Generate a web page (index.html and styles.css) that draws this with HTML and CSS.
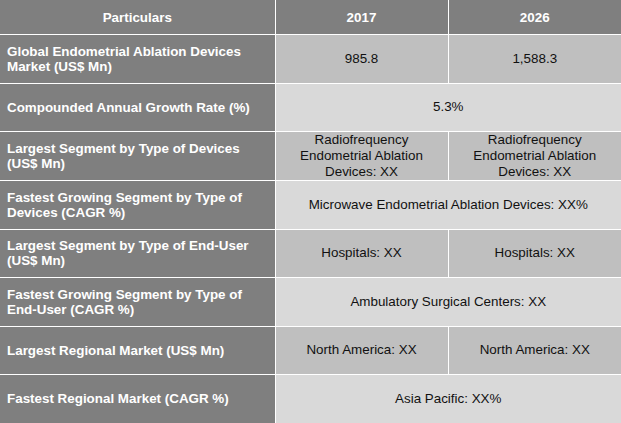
FILE: index.html
```html
<!DOCTYPE html>
<html>
<head>
<meta charset="utf-8">
<link rel="stylesheet" href="styles.css">
</head>
<body>
<table class="grid">
  <colgroup>
    <col class="c1">
    <col class="c2">
    <col class="c3">
  </colgroup>
  <thead>
    <tr class="head">
      <th>Particulars</th>
      <th>2017</th>
      <th>2026</th>
    </tr>
  </thead>
  <tbody>
    <tr class="dark">
      <th class="label">Global Endometrial Ablation Devices Market (US$ Mn)</th>
      <td>985.8</td>
      <td>1,588.3</td>
    </tr>
    <tr class="light">
      <th class="label">Compounded Annual Growth Rate (%)</th>
      <td colspan="2">5.3%</td>
    </tr>
    <tr class="dark">
      <th class="label">Largest Segment by Type of Devices (US$ Mn)</th>
      <td>Radiofrequency Endometrial Ablation Devices: XX</td>
      <td>Radiofrequency Endometrial Ablation Devices: XX</td>
    </tr>
    <tr class="light">
      <th class="label">Fastest Growing Segment by Type of Devices (CAGR %)</th>
      <td colspan="2">Microwave Endometrial Ablation Devices: XX%</td>
    </tr>
    <tr class="dark">
      <th class="label">Largest Segment by Type of End-User (US$ Mn)</th>
      <td>Hospitals: XX</td>
      <td>Hospitals: XX</td>
    </tr>
    <tr class="light">
      <th class="label">Fastest Growing Segment by Type of End&#8209;User (CAGR %)</th>
      <td colspan="2">Ambulatory Surgical Centers: XX</td>
    </tr>
    <tr class="dark">
      <th class="label">Largest Regional Market (US$ Mn)</th>
      <td>North America: XX</td>
      <td>North America: XX</td>
    </tr>
    <tr class="light">
      <th class="label">Fastest Regional Market (CAGR %)</th>
      <td colspan="2">Asia Pacific: XX%</td>
    </tr>
  </tbody>
</table>
</body>
</html>
```
FILE: styles.css
```css
html, body {
  margin: 0;
  padding: 0;
  background: #ffffff;
}
.grid {
  width: 621px;
  border-collapse: collapse;
  table-layout: fixed;
  font-family: "Liberation Sans", Arial, sans-serif;
  font-size: 13.4px;
}
.c1 { width: 275px; }
.c2 { width: 173px; }
.c3 { width: 173px; }
.grid th, .grid td {
  border: 1px solid #ffffff;
  padding: 0 6px;
  vertical-align: middle;
  line-height: 15px;
}
.grid tr:first-child th { border-top: none; }
.grid th:first-child { border-left: none; }
.grid th:last-child, .grid td:last-child { border-right: none; }
.grid tbody tr:last-child th, .grid tbody tr:last-child td { border-bottom: none; }
.head th {
  background: #7f7f7f;
  color: #ffffff;
  font-weight: bold;
  text-align: center;
  height: 34px;
}
.grid th.label {
  background: #7f7f7f;
  color: #ffffff;
  font-weight: bold;
  text-align: left;
  height: 47.5px;
  padding-left: 7px;
  padding-right: 14px;
}
.grid td {
  color: #111111;
  text-align: center;
  line-height: 16px;
}
.dark td { background: #bfbfbf; }
.light td { background: #d9d9d9; }
```
